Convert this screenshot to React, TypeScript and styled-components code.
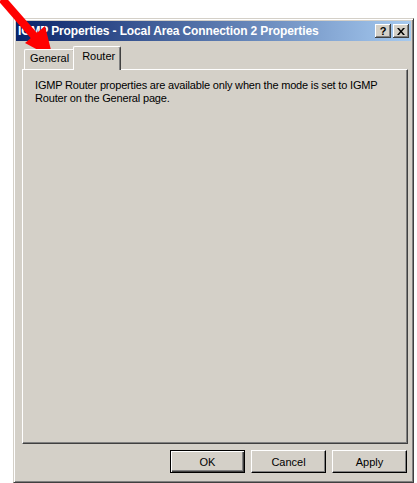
import styled, { createGlobalStyle } from "styled-components";

const GlobalStyle = createGlobalStyle`
  html, body {
    margin: 0;
    padding: 0;
    background: #ffffff;
    overflow: hidden;
  }
  body {
    font-family: "Liberation Sans", Arial, sans-serif;
  }
`;

const Page = styled.div`
  position: relative;
  width: 417px;
  height: 483px;
  padding: 18px 0 0 13px;
  box-sizing: border-box;
`;

const Window = styled.div`
  width: 401px;
  height: 465px;
  box-sizing: border-box;
  background: #d4d0c8;
  border-top: 1px solid #d4d0c8;
  border-left: 1px solid #d4d0c8;
  border-right: 1px solid #404040;
  border-bottom: 1px solid #404040;
  box-shadow: inset 1px 1px 0 #ffffff, inset -1px -1px 0 #808080;
  padding: 2px;
  display: flex;
  flex-direction: column;
`;

const TitleBar = styled.div`
  height: 20px;
  display: flex;
  align-items: center;
  padding: 0 2px 0 2px;
  background: linear-gradient(to right, #0a246a, #a6caf0);
`;

const Title = styled.span`
  flex: 1;
  color: #ffffff;
  font-weight: bold;
  font-size: 12px;
  letter-spacing: -0.12px;
  white-space: nowrap;
`;

const CaptionButton = styled.button<{ $gap?: number }>`
  width: 16px;
  height: 14px;
  margin-left: ${(p) => p.$gap ?? 0}px;
  padding: 0;
  background: #d4d0c8;
  border: none;
  box-shadow: inset -1px -1px 0 #404040, inset 1px 1px 0 #ffffff,
    inset -2px -2px 0 #808080;
  display: flex;
  align-items: center;
  justify-content: center;
  color: #000;
  font-family: "Liberation Sans", Arial, sans-serif;
  font-weight: bold;
  font-size: 11px;
`;

const Body = styled.div`
  flex: 1;
  display: flex;
  flex-direction: column;
  padding: 4px 3px 0 6px;
`;

const TabRow = styled.div`
  display: flex;
  align-items: flex-end;
  height: 24px;
  padding-left: 2px;
  position: relative;
  z-index: 1;
`;

const Tab = styled.div<{ $active?: boolean }>`
  box-sizing: border-box;
  height: ${(p) => (p.$active ? 24 : 20)}px;
  padding: ${(p) => (p.$active ? "3px 5px 0 8px" : "2px 5px 0 5px")};
  margin-left: ${(p) => (p.$active ? -2 : 0)}px;
  margin-bottom: ${(p) => (p.$active ? -1 : 0)}px;
  background: #d4d0c8;
  border-top: 1px solid #ffffff;
  border-left: 1px solid #ffffff;
  border-right: 1px solid #404040;
  box-shadow: inset -1px 0 0 #808080;
  border-radius: 2px 2px 0 0;
  font-size: 11px;
  color: #000;
  white-space: nowrap;
`;

const Panel = styled.div`
  flex: 1;
  box-sizing: border-box;
  border-top: 1px solid #ffffff;
  border-left: 1px solid #ffffff;
  border-right: 1px solid #404040;
  border-bottom: 1px solid #404040;
  box-shadow: inset -1px -1px 0 #808080;
  padding: 9px 12px;
`;

const Message = styled.p`
  margin: 0;
  width: 360px;
  font-size: 11px;
  letter-spacing: -0.18px;
  line-height: 13px;
  color: #000;
`;

const Footer = styled.div`
  display: flex;
  justify-content: flex-end;
  gap: 6px;
  padding: 6px 1px 7px 0;
`;

const PushButton = styled.button<{ $default?: boolean }>`
  width: 75px;
  height: 23px;
  box-sizing: border-box;
  background: #d4d0c8;
  border: 1px solid ${(p) => (p.$default ? "#000000" : "#ffffff")};
  border-right-color: #000000;
  border-bottom-color: #000000;
  box-shadow: ${(p) =>
    p.$default
      ? "inset 1px 1px 0 #ffffff, inset -1px -1px 0 #404040, inset -2px -2px 0 #808080"
      : "inset -1px -1px 0 #808080"};
  font-family: "Liberation Sans", Arial, sans-serif;
  font-size: 11px;
  color: #000;
  padding: 0;
`;

const Arrow = styled.svg`
  position: absolute;
  left: 0;
  top: 0;
`;

const RedArrow = () => (
  <Arrow width="60" height="62" viewBox="0 0 60 62">
    <line x1="2" y1="-1" x2="36" y2="38" stroke="#ff0000" strokeWidth="8" />
    <polygon points="53,58 25,43 45,26" fill="#ff0000" />
  </Arrow>
);

export default function App() {
  return (
    <>
      <GlobalStyle />
      <Page>
        <Window>
          <TitleBar>
            <Title>IGMP Properties - Local Area Connection 2 Properties</Title>
            <CaptionButton>?</CaptionButton>
            <CaptionButton $gap={2}>
              <svg width="8" height="7" viewBox="0 0 8 7">
                <path
                  d="M0 0h2l2 2.5L6 0h2L5 3.5 8 7H6L4 4.5 2 7H0l3-3.5z"
                  fill="#000"
                />
              </svg>
            </CaptionButton>
          </TitleBar>
          <Body>
            <TabRow>
              <Tab>General</Tab>
              <Tab $active>Router</Tab>
            </TabRow>
            <Panel>
              <Message>
                IGMP Router properties are available only when the mode is set
                to IGMP Router on the General page.
              </Message>
            </Panel>
            <Footer>
              <PushButton $default>OK</PushButton>
              <PushButton>Cancel</PushButton>
              <PushButton>Apply</PushButton>
            </Footer>
          </Body>
        </Window>
        <RedArrow />
      </Page>
    </>
  );
}
